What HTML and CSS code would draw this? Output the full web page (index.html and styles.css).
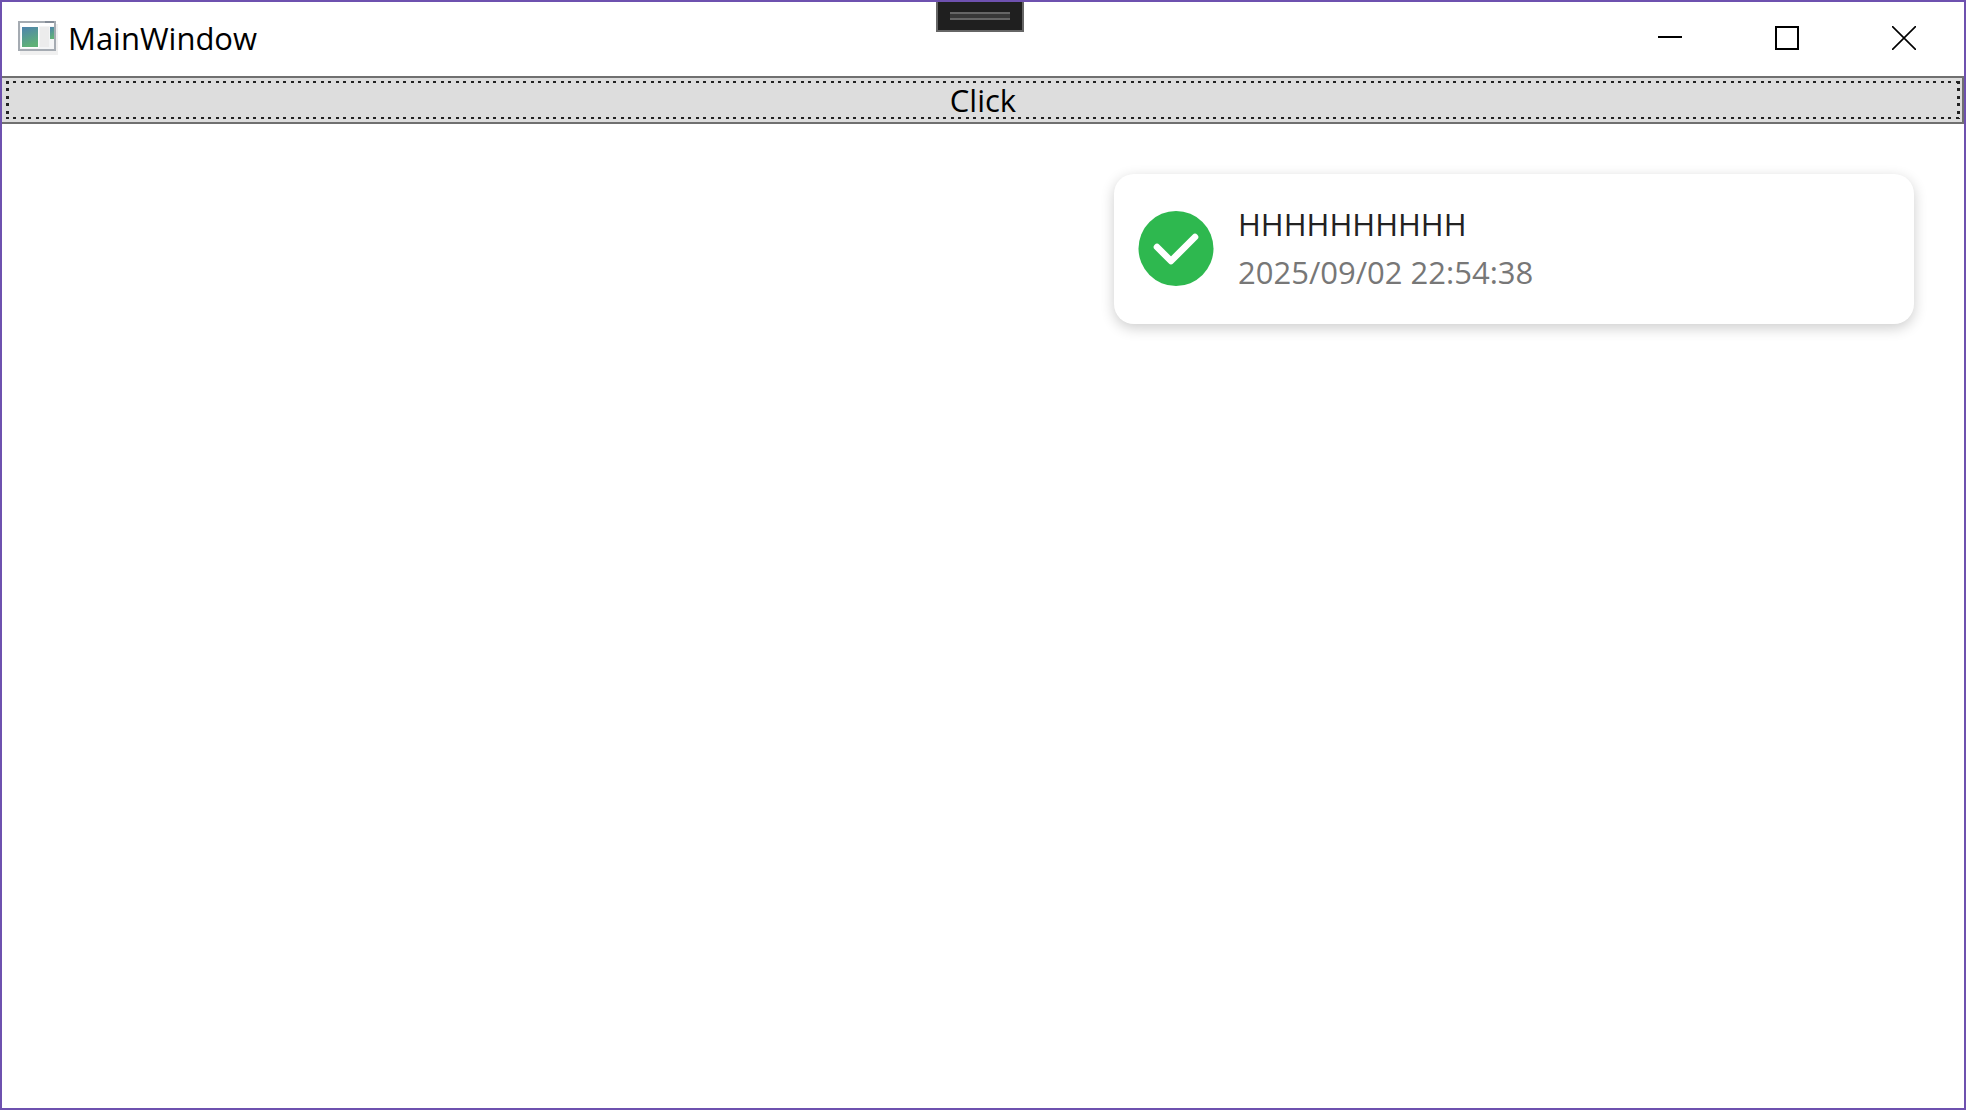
FILE: index.html
```html
<!DOCTYPE html>
<html lang="en">
    <head>
        <meta charset="utf-8">
        <title>MainWindow</title>
        <link rel="stylesheet" href="styles.css">
    </head>
    <body>
        <div class="window">
            <header class="titlebar">
                <svg class="app-icon" viewBox="0 0 40 34" aria-hidden="true">
                    <defs>
                        <linearGradient id="pane" x1="0" y1="0" x2="0.3" y2="1">
                            <stop offset="0" stop-color="#4f83ae"/>
                            <stop offset="1" stop-color="#5fb177"/>
                        </linearGradient>
                    </defs>
                    <rect x="2" y="3" width="38" height="31" fill="#f0f0f0"/>
                    <rect x="1" y="1" width="36" height="28" fill="#f4f5f6" stroke="#a5abb2" stroke-width="2"/>
                    <rect x="27" y="0" width="9" height="2" fill="#858d98"/>
                    <rect x="2" y="2" width="34" height="3" fill="#fff"/>
                    <rect x="3" y="5" width="18" height="22" fill="#fff"/>
                    <rect x="4" y="6" width="16" height="20" fill="url(#pane)"/>
                    <rect x="22" y="6" width="9" height="20" fill="#ececec"/>
                    <rect x="32" y="6" width="4" height="12" fill="url(#pane)"/>
                </svg>
                <h1 class="title">MainWindow</h1>
                <div class="controls">
                    <button class="control" type="button" aria-label="Minimize">
                        <svg viewBox="0 0 24 24"><path d="M0 11h24"/></svg>
                    </button>
                    <button class="control" type="button" aria-label="Maximize">
                        <svg viewBox="0 0 24 24"><path d="M1 1h22v22H1z"/></svg>
                    </button>
                    <button class="control" type="button" aria-label="Close">
                        <svg viewBox="0 0 24 24"><path d="M0 0l24 24M24 0L0 24" stroke-width="1.6"/></svg>
                    </button>
                </div>
            </header>
            <div class="debug-bar"></div>
            <button class="click-button" type="button"><span class="focus-ring">Click</span></button>
            <main class="content">
                <section class="toast" role="status">
                    <svg class="toast-icon" viewBox="0 0 76 76" aria-hidden="true">
                        <circle cx="38" cy="37.5" r="37.5" fill="#2eb84f"/>
                        <path d="M19 36l14 14 24-24" fill="none" stroke="#fff" stroke-width="6.6" stroke-linecap="round" stroke-linejoin="round"/>
                    </svg>
                    <div class="toast-text">
                        <p class="toast-message">HHHHHHHHHH</p>
                        <time class="toast-time" datetime="2025-09-02T22:54:38">2025/09/02 22:54:38</time>
                    </div>
                </section>
            </main>
        </div>
    </body>
</html>
```
FILE: styles.css
```css
*,
*::before {
    margin: 0;
    padding: 0;
    box-sizing: border-box;
}
:root {
    --accent-color: #6e51af;
    --border-color: #707070;
    --face-color: #ddd;
}
body {
    font-family: "Open Sans", "Noto Sans", sans-serif;
    font-size: 31px;
    line-height: 42px;
    color: #000;
    background-color: #fff;
}
button {
    font: inherit;
    color: inherit;
}
.window {
    position: relative;
    display: flex;
    flex-direction: column;
    min-height: 100vh;
    border: 2px solid var(--accent-color);
}
.titlebar {
    display: flex;
    align-items: center;
    height: 74px;
    padding: 0 2px 2px 16px;
}
.app-icon {
    width: 40px;
    height: 34px;
    margin-right: 10px;
}
.title {
    font-size: inherit;
    font-weight: normal;
}
.controls {
    display: flex;
    align-self: stretch;
    margin-left: auto;
}
.control {
    display: flex;
    align-items: center;
    justify-content: center;
    width: 117px;
    border: 0;
    background-color: transparent;
}
.control svg {
    width: 24px;
    height: 24px;
    fill: none;
    stroke: #000;
    stroke-width: 2;
}
.debug-bar {
    position: absolute;
    top: 0;
    left: 50%;
    width: 88px;
    height: 30px;
    margin-left: -47px;
    padding: 10px 12px;
    border: 2px solid #666;
    border-top: 0;
    background-color: #1f1f1f;
}
.debug-bar::before {
    content: "";
    display: block;
    height: 8px;
    border: solid #666;
    border-width: 2px 0;
    background-color: #383838;
}
.click-button {
    height: 48px;
    padding: 3px 2px 3px 4px;
    border: 2px solid var(--border-color);
    border-left: 0;
    background-color: var(--face-color);
}
.focus-ring {
    --dots: #222 0 3px, transparent 3px 7px, #222 7px 10px, transparent 10px 15px;
    display: block;
    height: 38px;
    line-height: 38px;
    background:
        repeating-linear-gradient(90deg, var(--dots)) top / 100% 2px no-repeat,
        repeating-linear-gradient(90deg, var(--dots)) bottom / 100% 2px no-repeat,
        repeating-linear-gradient(var(--dots)) left / 3px 100% no-repeat,
        repeating-linear-gradient(var(--dots)) right / 3px 100% no-repeat;
}
.content {
    flex: 1;
    padding: 50px;
}
.toast {
    display: flex;
    align-items: center;
    gap: 24px;
    width: 100%;
    max-width: 800px;
    min-height: 150px;
    margin-left: auto;
    padding: 24px;
    border-radius: 20px;
    background-color: #fff;
    box-shadow: 0 4px 14px rgba(0, 0, 0, .2);
}
.toast-icon {
    flex: none;
    width: 76px;
    height: 76px;
}
.toast-text {
    display: flex;
    flex-direction: column;
    gap: 6px;
    padding-bottom: 2px;
}
.toast-message {
    color: #222;
}
.toast-time {
    color: #777;
}
```
